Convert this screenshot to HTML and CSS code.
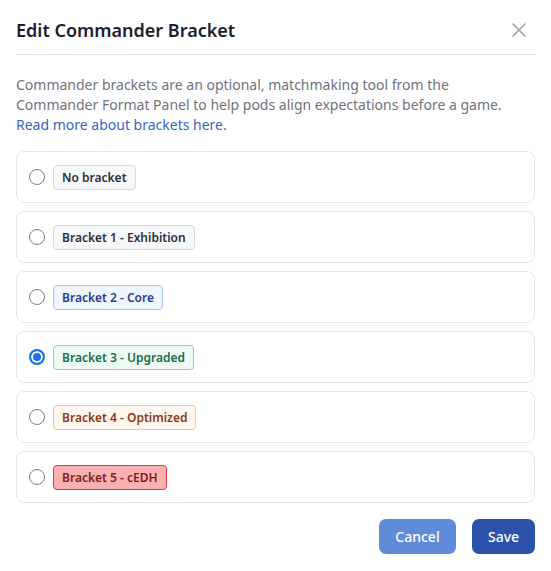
FILE: index.html
```html
<!DOCTYPE html>
<html>
<head>
<meta charset="utf-8">
<link rel="stylesheet" href="styles.css">
</head>
<body>
<div class="modal">
  <div class="header">
    <h1 class="title">Edit Commander Bracket</h1>
    <button class="close" aria-label="Close">
      <svg width="14" height="14" viewBox="0 0 14 14"><path d="M1 1L13 13M13 1L1 13" stroke="#9ca3af" stroke-width="1.6" stroke-linecap="round"/></svg>
    </button>
  </div>
  <p class="desc">Commander brackets are an optional, matchmaking tool from the<br>Commander Format Panel to help pods align expectations before a game.<br><a class="link" href="#">Read more about brackets here.</a></p>
  <div class="options">
    <label class="option"><span class="radio"></span><span class="badge b0">No bracket</span></label>
    <label class="option"><span class="radio"></span><span class="badge b1">Bracket 1 - Exhibition</span></label>
    <label class="option"><span class="radio"></span><span class="badge b2">Bracket 2 - Core</span></label>
    <label class="option"><span class="radio checked"></span><span class="badge b3">Bracket 3 - Upgraded</span></label>
    <label class="option"><span class="radio"></span><span class="badge b4">Bracket 4 - Optimized</span></label>
    <label class="option"><span class="radio"></span><span class="badge b5">Bracket 5 - cEDH</span></label>
  </div>
  <div class="footer">
    <button class="btn cancel">Cancel</button>
    <button class="btn save">Save</button>
  </div>
</div>
</body>
</html>
```
FILE: styles.css
```css
html, body { margin: 0; padding: 0; background: #fff; }
body { font-family: "Noto Sans", "Open Sans", sans-serif; color: #1f2133; }
.modal { padding: 0 16px 16px 16px; }
.header {
  display: flex; align-items: center; justify-content: space-between;
  height: 55px; border-bottom: 1px solid #e3e5ea; box-sizing: border-box;
  padding-top: 6px;
}
.title { margin: 0; font-size: 18px; font-weight: 600; color: #1c1d2e; letter-spacing: 0; }
.close { background: none; border: 0; padding: 0; margin-right: 9px; width: 14px; height: 14px; display: flex; cursor: pointer; }
.desc { margin: 20px 0 16px 0; font-size: 14px; line-height: 20px; color: #6f737e; white-space: nowrap; }
.link { color: #3d63c4; text-decoration: none; }
.options { display: flex; flex-direction: column; gap: 8px; }
.option {
  display: flex; align-items: center; gap: 8px;
  height: 52px; box-sizing: border-box; padding-left: 12px;
  border: 1px solid #e6e7eb; border-radius: 8px;
}
.radio {
  width: 16px; height: 16px; box-sizing: border-box; border-radius: 50%;
  border: 1px solid #7a7d85; background: #fff; flex: none;
}
.radio.checked { border: 2px solid #1a73e8; box-shadow: inset 0 0 0 2px #fff; background: #1a73e8; }
.badge {
  display: inline-flex; align-items: center; height: 25px; box-sizing: border-box;
  padding: 0 8px; border-radius: 4px; border: 1px solid; font-size: 12px; font-weight: 600;
}
.b0, .b1 { background: #f7f8fa; border-color: #d7dae1; color: #2b2e3d; }
.b2 { background: #eef5ff; border-color: #a6c8f4; color: #2b3f8c; }
.b3 { background: #ecfbf4; border-color: #72deb1; color: #1c6b4b; }
.b4 { background: #fff7ee; border-color: #f8c88c; color: #883a1a; }
.b5 { background: #fbb1b1; border-color: #e33b3b; color: #7b1d1d; }
.footer { display: flex; justify-content: flex-end; gap: 16px; margin-top: 16px; }
.btn {
  height: 35px; border: 0; border-radius: 7px; color: #fff; font-family: inherit;
  font-size: 14px; font-weight: 500; padding: 0;
}
.cancel { background: #5f8cd8; width: 77px; }
.save { background: #2d52ab; width: 63px; }
```
